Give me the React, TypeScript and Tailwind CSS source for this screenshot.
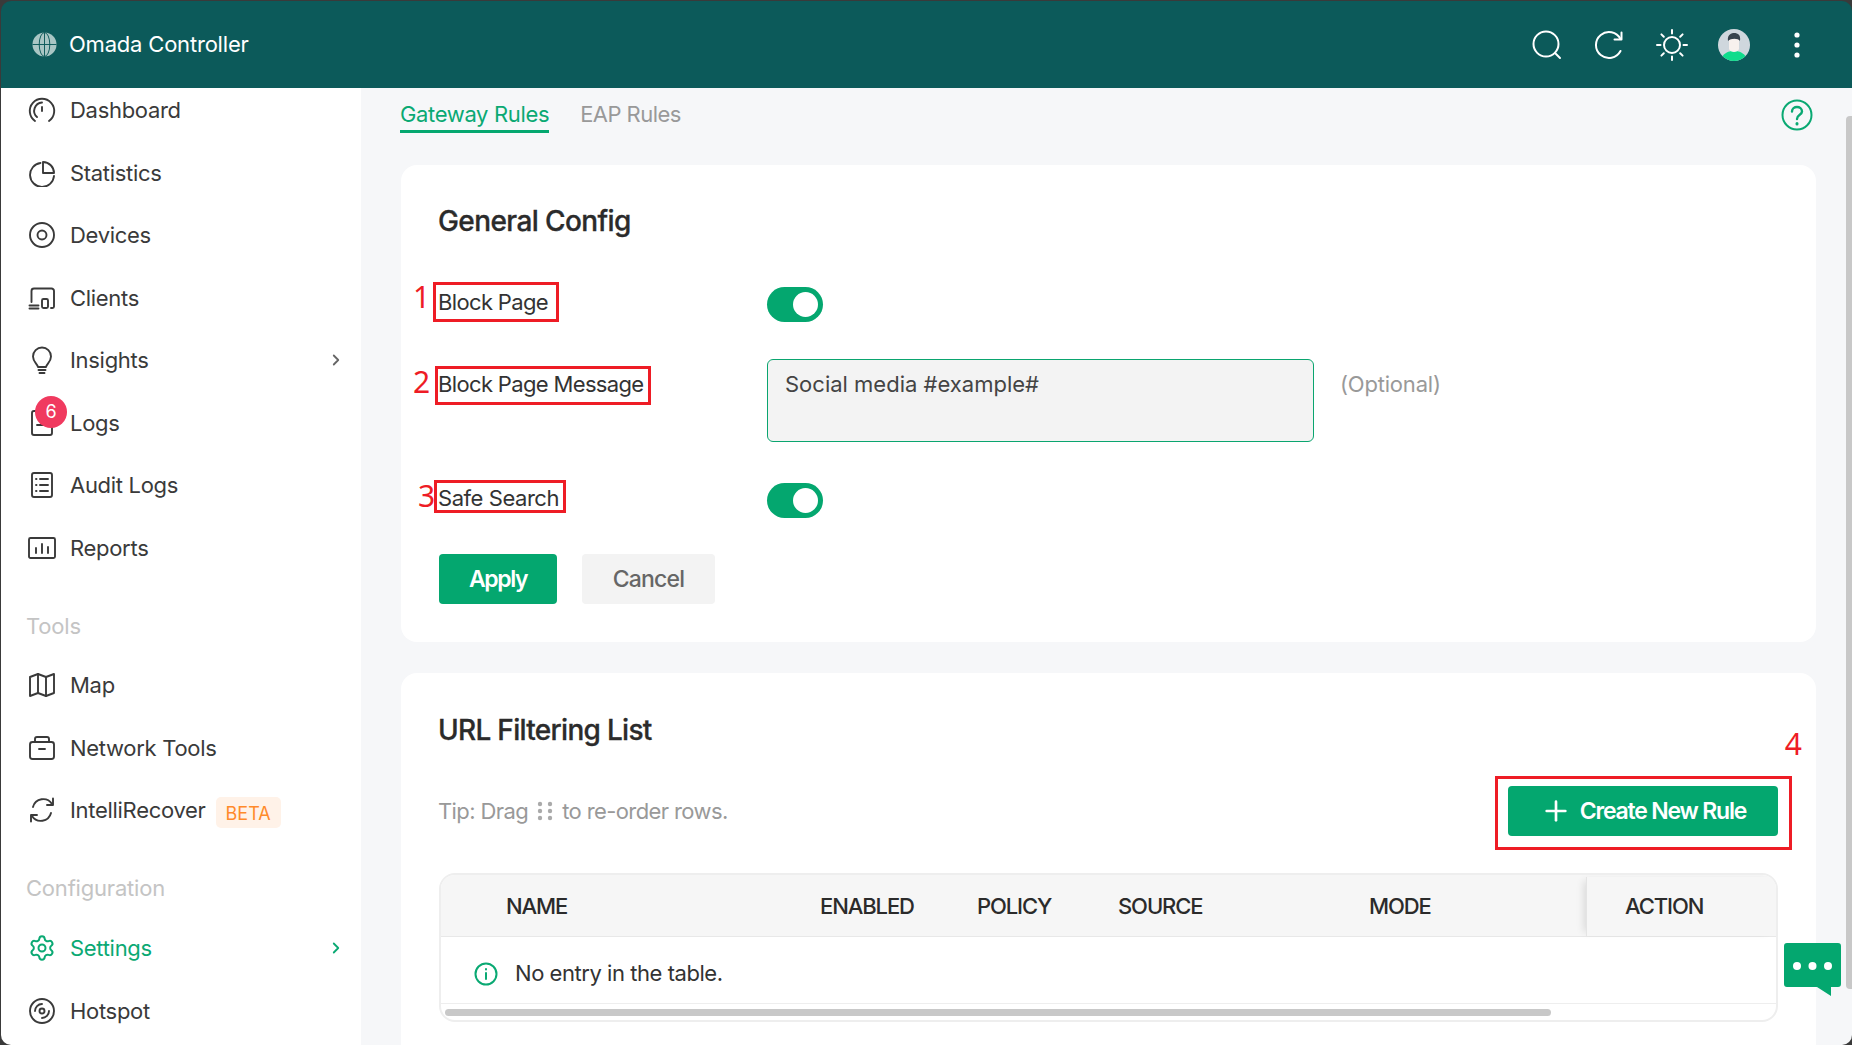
import { ChevronRight, Plus, Settings } from "lucide-react";
import type { ReactNode } from "react";

const Ico = ({ children }: { children: ReactNode }) => (
  <svg viewBox="0 0 28 28" className="w-7 h-7 shrink-0" fill="none" stroke="currentColor" strokeWidth="1.9" strokeLinecap="round" strokeLinejoin="round">
    {children}
  </svg>
);

const ICONS: Record<string, ReactNode> = {
  dashboard: (
    <Ico>
      <path d="M7 25 A12.2 12.2 0 1 1 21 25" />
      <path d="M9 21 A8.3 8.3 0 0 1 14 6.5" />
      <path d="M14 11 V15" />
    </Ico>
  ),
  statistics: (
    <Ico>
      <path d="M12.5 4 A12 12 0 1 0 26 17" />
      <path d="M15 3 A11 11 0 0 1 26 14 H15 Z" />
    </Ico>
  ),
  devices: (
    <Ico>
      <circle cx="14" cy="14" r="12" />
      <circle cx="14" cy="14" r="4.5" />
    </Ico>
  ),
  clients: (
    <Ico>
      <path d="M3.5 18 V7 a2.500 2.500 0 0 1 2.500-2.500 H23.500 a2.500 2.500 0 0 1 2.500 2.500 V22.500 a1.500 1.500 0 0 1-1.500 1.500 H23" />
      <path d="M1.500 21.500 H10.500 M1.500 24.500 H10.500" />
      <rect x="14" y="15" width="6" height="9" rx="1.500" />
    </Ico>
  ),
  insights: (
    <Ico>
      <path d="M10 21 C9.500 18 5 16 5 10.500 A9 9 0 0 1 23 10.500 C23 16 18.500 18 18 21 Z" />
      <path d="M10.500 24 H17.500 M11.500 27 H16.500" />
    </Ico>
  ),
  logs: (
    <Ico>
      <rect x="4" y="2" width="20" height="24" rx="2" />
      <path d="M9 16 H19" />
    </Ico>
  ),
  audit: (
    <Ico>
      <rect x="4" y="2" width="20" height="24" rx="2" />
      <path d="M12 8 H20 M12 14 H20 M12 20 H20 M8 8 H8.500 M8 14 H8.500 M8 20 H8.500" />
    </Ico>
  ),
  reports: (
    <Ico>
      <rect x="1" y="4" width="26" height="20" rx="1.500" />
      <path d="M8 14 V19 M14 10 V19 M20 13 V19" />
    </Ico>
  ),
  map: (
    <Ico>
      <path d="M2 6 L10 3 L18 6 L26 3 V22 L18 25 L10 22 L2 25 Z" />
      <path d="M10 3 V22 M18 6 V25" />
    </Ico>
  ),
  tools: (
    <Ico>
      <rect x="2" y="8" width="24" height="17" rx="2.500" />
      <path d="M7 8 V5 a2 2 0 0 1 2-2 H19 a2 2 0 0 1 2 2 V8" />
      <path d="M11 15 H17" />
    </Ico>
  ),
  recover: (
    <Ico>
      <path d="M5 11 A10.500 10.500 0 0 1 24 8" />
      <path d="M25 2.500 V9 H19" />
      <path d="M23 17 A10.500 10.500 0 0 1 4 20" />
      <path d="M3 25.500 V19 H9" />
    </Ico>
  ),
  settings: <Settings className="w-7 h-7 shrink-0" strokeWidth={1.7} />,
  hotspot: (
    <Ico>
      <circle cx="14" cy="14" r="12" />
      <circle cx="14" cy="14" r="2.500" />
      <path d="M7 14 A7 7 0 0 1 14 7 M21 14 A7 7 0 0 1 14 21" />
    </Ico>
  ),
};

const NAV_TOP = [
  { key: "dashboard", label: "Dashboard" },
  { key: "statistics", label: "Statistics" },
  { key: "devices", label: "Devices" },
  { key: "clients", label: "Clients" },
  { key: "insights", label: "Insights", arrow: true },
  { key: "logs", label: "Logs", badge: 6 },
  { key: "audit", label: "Audit Logs" },
  { key: "reports", label: "Reports" },
];

function NavItem({ item }: { item: { key: string; label: string; arrow?: boolean; badge?: number; active?: boolean; beta?: boolean } }) {
  return (
    <div className={`relative flex items-center h-[62.6px] pl-[27px] pr-[16px] ${item.active ? "text-[#0aa973]" : "text-[#3a3a3a]"}`}>
      {ICONS[item.key]}
      <span className="ml-[14px] text-[22px] leading-7 tracking-[-0.3px]">{item.label}</span>
      {item.beta && (
        <span className="ml-[10px] mt-[4px] h-[31px] px-[10px] rounded-[5px] bg-[#fff2e8] text-[#ff8a2b] text-[18px] leading-[33px]">BETA</span>
      )}
      {item.arrow && <ChevronRight className={`ml-auto w-[18px] h-[18px] ${item.active ? "" : "text-[#666]"}`} strokeWidth={2.4} />}
      {item.badge && (
        <span className="absolute left-[34px] top-[4px] w-8 h-8 rounded-full bg-[#f03a5f] text-white text-[18px] leading-8 text-center">{item.badge}</span>
      )}
    </div>
  );
}

function Sidebar() {
  return (
    <aside className="w-[360px] shrink-0 bg-white overflow-hidden">
      <div className="-mt-[9.4px]">
        {NAV_TOP.map((n) => <NavItem key={n.key} item={n} />)}
        <div className="h-[74.6px] pt-[32.6px] pl-[25px] text-[22px] leading-7 text-[#c4c4c4] tracking-[-0.2px]">Tools</div>
        <NavItem item={{ key: "map", label: "Map" }} />
        <NavItem item={{ key: "tools", label: "Network Tools" }} />
        <NavItem item={{ key: "recover", label: "IntelliRecover", beta: true }} />
        <div className="h-[74.9px] pt-[32px] pl-[25px] text-[22px] leading-7 text-[#c4c4c4] tracking-[-0.2px]">Configuration</div>
        <NavItem item={{ key: "settings", label: "Settings", arrow: true, active: true }} />
        <NavItem item={{ key: "hotspot", label: "Hotspot" }} />
      </div>
    </aside>
  );
}

function Toggle() {
  return (
    <div className="w-14 h-[35px] rounded-full bg-[#04a76f] flex items-center justify-end pr-[5px]">
      <div className="w-[25px] h-[25px] rounded-full bg-white" />
    </div>
  );
}

// red markers drawn on top of the screenshot
function Marked({ n, num, box, shift, children }: { n: string; num: string; box: string; shift?: string; children: ReactNode }) {
  return (
    <div className={`relative w-[328px] text-[22px] leading-7 text-[#333] ${shift ?? "tracking-[-0.65px]"}`}>
      <span className="-ml-px">{children}</span>
      <span className={`absolute border-[3px] border-[#ee1c25] ${box}`} />
      <span className={`absolute text-[#ee1c25] text-[30px] leading-8 font-['Noto_Sans',sans-serif] ${num}`}>{n}</span>
    </div>
  );
}

function GeneralConfig() {
  return (
    <section className="bg-white rounded-[16px] pl-[38px] pt-[40px] pb-[38px]">
      <h2 className="-ml-px text-[28px] leading-8 font-medium text-[#2b2b2b] tracking-[-0.6px] [-webkit-text-stroke:0.3px_#2b2b2b]">General Config</h2>
      <div className="mt-[50px] flex items-center h-[35px]">
        <Marked n="1" num="-left-[26px] -top-[7px]" box="-left-[6px] -top-[6px] w-[126px] h-[40px]" shift="mb-[5px] tracking-[-0.65px]">Block Page</Marked>
        <Toggle />
      </div>
      <div className="mt-[37px] flex items-start">
        <div className="pt-[11px]">
          <Marked n="2" num="-left-[26px] -top-[4px]" box="-left-[4px] -top-[4px] w-[216px] h-[39px]">Block Page Message</Marked>
        </div>
        <div className="w-[547px] h-[83px] rounded-[6px] border-[1.5px] border-[#0aa56f] bg-[#f3f3f3] pl-[17px] pt-[10px] text-[22px] leading-7 text-[#444]">Social media #example#</div>
        <span className="ml-[26px] mt-[11px] text-[22px] leading-7 text-[#999] tracking-[-0.2px]">(Optional)</span>
      </div>
      <div className="mt-[41px] flex items-center h-[34px]">
        <Marked n="3" num="-left-[21px] -top-[4px]" box="-left-[5px] -top-[4px] w-[132px] h-[33px]" shift="mb-[4px] tracking-[-0.45px]">Safe Search</Marked>
        <Toggle />
      </div>
      <div className="mt-[37px] flex gap-[25px]">
        <button className="w-[118px] h-[50px] rounded-[4px] bg-[#04a76f] text-white text-[23px] font-semibold tracking-[-1.4px]">Apply</button>
        <button className="w-[133px] h-[50px] rounded-[4px] bg-[#f3f3f3] text-[#666] text-[23px] font-medium tracking-[-0.8px]">Cancel</button>
      </div>
    </section>
  );
}

const COLS = [
  { label: "NAME", w: "w-[379px]", pl: "pl-[65px]" },
  { label: "ENABLED", w: "w-[157px]" },
  { label: "POLICY", w: "w-[141px]" },
  { label: "SOURCE", w: "w-[251px]" },
  { label: "MODE", w: "w-[217px]" },
];

function UrlList() {
  return (
    <section className="mt-[31px] bg-white rounded-t-[16px] pl-[38px] pr-[38px] pt-[41px] pb-[40px]">
      <h2 className="-ml-px text-[28px] leading-8 font-medium text-[#2b2b2b] tracking-[-0.7px] [-webkit-text-stroke:0.3px_#2b2b2b]">URL Filtering List</h2>
      <div className="mt-[40px] flex items-center justify-between h-[50px]">
        <div className="-ml-px flex items-center text-[22px] leading-7 text-[#999] tracking-[-0.6px]">
          Tip: Drag
          <svg viewBox="0 0 16 20" className="w-4 h-5 mx-[9px]" fill="#aaa">
            <circle cx="3" cy="3" r="2.200" /><circle cx="13" cy="3" r="2.200" />
            <circle cx="3" cy="10" r="2.200" /><circle cx="13" cy="10" r="2.200" />
            <circle cx="3" cy="17" r="2.200" /><circle cx="13" cy="17" r="2.200" />
          </svg>
          to re-order rows.
        </div>
        <div className="relative">
          <button className="flex items-center justify-center gap-[8px] w-[270px] h-[50px] rounded-[4px] bg-[#04a76f] text-white text-[23px] font-semibold tracking-[-1.2px]">
            <Plus className="w-8 h-8" strokeWidth={2} />
            Create New Rule
          </button>
          <span className="absolute -left-[13px] -top-[10px] -right-[14px] -bottom-[14px] border-[3px] border-[#ee1c25]" />
          <span className="absolute -right-[24px] -top-[58px] text-[#ee1c25] text-[30px] leading-8 font-['Noto_Sans',sans-serif]">4</span>
        </div>
      </div>
      <div className="mt-[37px] h-[149px] rounded-[16px] border-2 border-[#eeeeee] overflow-hidden">
        <div className="flex items-center h-[62px] pt-[2px] bg-[#f6f6f6] border-b border-[#e8e8e8] text-[22px] font-medium text-[#2b2b2b] tracking-[-1.1px]">
          {COLS.map((c) => <div key={c.label} className={`${c.w} shrink-0 ${c.pl ?? ""}`}>{c.label}</div>)}
          <div className="h-full flex-1 flex items-center pl-[38px] border-l border-[#e4e4e4] shadow-[-6px_0_8px_-4px_rgba(0,0,0,0.12)]">ACTION</div>
        </div>
        <div className="flex items-center h-[67px] pt-[7px] border-b border-[#eeeeee] pl-[33px] text-[22px] text-[#333] tracking-[-0.45px]">
          <svg viewBox="0 0 24 24" className="w-6 h-6 mr-[17px]" fill="none" stroke="#0aa973" strokeWidth="2" strokeLinecap="round">
            <circle cx="12" cy="12" r="10.500" />
            <path d="M12 11 V17 M12 7 V7.500" />
          </svg>
          No entry in the table.
        </div>
        <div className="pl-[4px] pt-[5px]">
          <div className="w-[1106px] h-[7px] rounded-full bg-[#c8c8c8]" />
        </div>
      </div>
    </section>
  );
}

export default function App() {
  return (
    <div className="w-screen h-screen overflow-hidden bg-[#3a3a3a] pl-px pt-px font-['Inter',sans-serif]">
      <div className="relative h-full flex flex-col rounded-[10px] overflow-hidden">
        <header className="h-[87px] shrink-0 bg-[#0c5a5a] flex items-center pl-[31px] text-white">
          <svg viewBox="0 0 26 26" className="w-[25px] h-[25px]" fill="none">
            <circle cx="13" cy="13" r="12.500" fill="#a9c6c4" />
            <path d="M13 .5 V25.500 M.5 13 H25.500" stroke="#0c5a5a" strokeWidth="1" />
            <ellipse cx="13" cy="13" rx="5.500" ry="12.500" stroke="#0c5a5a" strokeWidth="1" />
          </svg>
          <span className="ml-[12px] text-[22px] font-normal tracking-[-0.2px]">Omada Controller</span>
          <div className="ml-auto flex items-center">
            <svg viewBox="0 0 32 32" className="w-8 h-8" fill="none" stroke="#fff" strokeWidth="2" strokeLinecap="round">
              <circle cx="15" cy="15" r="12.500" />
              <path d="M24 24 L29 29" />
            </svg>
            <svg viewBox="0 0 32 32" className="w-8 h-8 ml-[30px]" fill="none" stroke="#fff" strokeWidth="2" strokeLinecap="round" strokeLinejoin="round">
              <path d="M27.500 10 A13 13 0 1 0 27.500 22" />
              <path d="M28.500 3.500 V10.500 H21.500" />
            </svg>
            <svg viewBox="0 0 32 32" className="w-8 h-8 ml-[31px]" fill="none" stroke="#fff" strokeWidth="2" strokeLinecap="round">
              <circle cx="16" cy="16" r="8" />
              <path d="M16 1 V4.500 M16 27.500 V31 M1 16 H4.500 M27.500 16 H31 M5.400 5.400 L7.800 7.800 M24.200 24.200 L26.600 26.600 M5.400 26.600 L7.800 24.200 M24.200 7.800 L26.600 5.400" />
            </svg>
            <svg viewBox="0 0 32 32" className="w-8 h-8 ml-[30px]">
              <clipPath id="av"><circle cx="16" cy="16" r="16" /></clipPath>
              <g clipPath="url(#av)">
                <rect width="32" height="32" fill="#cfd7dd" />
                <path d="M3 32 C4 24 10 23 13 22 H19 C22 23 28 24 29 32 Z" fill="#0fdc8c" />
                <path d="M11 10 H21 V20 C20 24 12 24 11 20 Z" fill="#f7f1ee" />
                <path d="M10 12 C9 5 14 4 16 4 C20 4 23 6 22 12 C20 9 13 9 10 12 Z" fill="#36434c" />
              </g>
            </svg>
            <svg viewBox="0 0 8 26" className="w-2 h-[26px] ml-[43px] mr-[51px]" fill="#fff">
              <circle cx="4" cy="3" r="2.600" /><circle cx="4" cy="13" r="2.600" /><circle cx="4" cy="23" r="2.600" />
            </svg>
          </div>
        </header>

        <div className="flex-1 flex min-h-0">
          <Sidebar />
          <main className="flex-1 min-w-0 bg-[#f6f7f9] pl-[40px] pr-[36px] overflow-hidden">
            <div className="flex justify-between items-start h-[45px] mb-[32px]">
              <div className="-ml-px flex gap-[31px] text-[22px] leading-7 tracking-[-0.35px]">
                <div className="pt-[12px] h-[45px] pb-[2px] border-b-[3px] border-[#04a76f] text-[#0aa973]">Gateway Rules</div>
                <div className="pt-[12px] text-[#999] tracking-[-0.55px]">EAP Rules</div>
              </div>
              <svg viewBox="0 0 32 32" className="w-8 h-8 mt-[11px] mr-[3px]" fill="none" stroke="#0aa973" strokeWidth="2" strokeLinecap="round">
                <circle cx="16" cy="16" r="14.500" />
                <path d="M11 12.500 C11 6.500 21 6.500 21 12.500 C21 16 16 15.500 16 20" strokeWidth="2.400" />
                <path d="M16 24.500 V25" strokeWidth="3" />
              </svg>
            </div>
            <GeneralConfig />
            <UrlList />
          </main>
        </div>

        {/* page scrollbar */}
        <div className="absolute right-0 top-[115px] w-[6px] h-[873px] rounded-l-[4px] bg-[#c8c8c8]" />
        {/* chat bubble */}
        <svg viewBox="0 0 57 53" className="absolute left-[1783px] top-[942px] w-[57px] h-[53px]">
          <path d="M3 0 H54 a3 3 0 0 1 3 3 V41 a3 3 0 0 1-3 3 H47 V53 L33 44 H3 a3 3 0 0 1-3-3 V3 a3 3 0 0 1 3-3 Z" fill="#04a76f" />
          <circle cx="13" cy="23" r="4" fill="#fff" /><circle cx="28.500" cy="23" r="4" fill="#fff" /><circle cx="44" cy="23" r="4" fill="#fff" />
        </svg>
      </div>
    </div>
  );
}
